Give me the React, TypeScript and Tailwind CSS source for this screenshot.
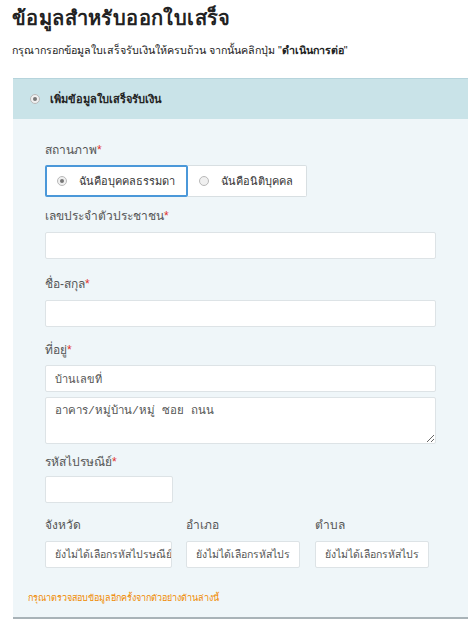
import React from "react";

function Radio({ checked }: { checked?: boolean }) {
  return (
    <span className="inline-flex h-[10px] w-[10px] shrink-0 items-center justify-center rounded-full border border-[#b9b9b9] bg-[#f0f0f0]">
      {checked && <span className="h-[4px] w-[4px] rounded-full bg-[#777]" />}
    </span>
  );
}

function Label({ text, req }: { text: string; req?: boolean }) {
  return (
    <p className="text-[12px] leading-[18px] text-[#555]">
      {text}
      {req && <span className="text-[#e0312c]">*</span>}
    </p>
  );
}

function Input({ className = "", placeholder = "" }: { className?: string; placeholder?: string }) {
  return (
    <input
      type="text"
      placeholder={placeholder}
      className={
        "block h-[27px] rounded-[2px] border border-[#dde3e6] bg-white px-[9px] text-[11px] text-[#333] placeholder:text-[#555] focus:outline-none " +
        className
      }
    />
  );
}

function Select({ text, className = "" }: { text: string; className?: string }) {
  return (
    <div
      className={
        "mt-[7px] flex h-[27px] items-center overflow-hidden whitespace-nowrap rounded-[2px] border border-[#dde3e6] bg-white pl-[9px] text-[10.5px] text-[#555] " +
        className
      }
    >
      {text}
    </div>
  );
}

export default function App() {
  return (
    <div className="h-[620px] w-[476px] overflow-hidden bg-white font-['Liberation_Sans',sans-serif]">
      <div className="px-[12px] pt-[3px]">
        <h1 className="text-[20px] font-bold leading-[30px] tracking-[0.4px] text-[#222]">ข้อมูลสำหรับออกใบเสร็จ</h1>
        <p className="mt-[9px] text-[10.7px] leading-[16px] text-[#222]">
          กรุณากรอกข้อมูลใบเสร็จรับเงินให้ครบถ้วน จากนั้นคลิกปุ่ม "<span className="font-bold">ดำเนินการต่อ</span>"
        </p>
      </div>

      <div className="ml-[13px] mt-[20px] w-[455px] border-b-2 border-[#a9b3b8] bg-[#eff6f9]">
        <div className="flex h-[41px] items-center gap-[10px] border-t border-[#b6d4dc] bg-[#c9e3e8] pl-[17px]">
          <Radio checked />
          <span className="text-[11px] font-bold text-[#222]">เพิ่มข้อมูลใบเสร็จรับเงิน</span>
        </div>

        <div className="pb-[12px] pl-[32px] pr-[32px] pt-[22px]">
          <Label text="สถานภาพ" req />
          <div className="mt-[6px] flex">
            <div className="flex h-[32px] w-[143px] items-center gap-[12px] whitespace-nowrap rounded-[2px] border-2 border-[#4b98d9] bg-white pl-[10px] text-[11px] text-[#333]">
              <Radio checked />
              ฉันคือบุคคลธรรมดา
            </div>
            <div className="flex h-[32px] w-[119px] items-center gap-[12px] whitespace-nowrap rounded-r-[2px] border border-l-0 border-[#d8dfe2] bg-white pl-[11px] text-[11px] text-[#333]">
              <Radio />
              ฉันคือนิติบุคคล
            </div>
          </div>

          <div className="mt-[10px]">
            <Label text="เลขประจำตัวประชาชน" req />
          </div>
          <Input className="mt-[7px] w-[391px]" />

          <div className="mt-[16px]">
            <Label text="ชื่อ-สกุล" req />
          </div>
          <Input className="mt-[7px] w-[391px]" />

          <div className="mt-[14px]">
            <Label text="ที่อยู่" req />
          </div>
          <Input className="mt-[6px] w-[391px]" placeholder="บ้านเลขที่" />
          <textarea
            placeholder="อาคาร/หมู่บ้าน/หมู่ ซอย ถนน"
            className="mt-[5px] block h-[47px] w-[391px] rounded-[2px] border border-[#dde3e6] bg-white px-[9px] py-[4px] font-['Liberation_Mono',monospace] text-[11.5px] placeholder:text-[#555] focus:outline-none"
          />

          <div className="mt-[9px]">
            <Label text="รหัสไปรษณีย์" req />
          </div>
          <Input className="mt-[5px] w-[128px]" />

          <div className="mt-[13px] flex">
            <div className="w-[141px]">
              <Label text="จังหวัด" />
              <Select text="ยังไม่ได้เลือกรหัสไปรษณีย์" className="w-[127px]" />
            </div>
            <div className="w-[129px]">
              <Label text="อำเภอ" />
              <Select text="ยังไม่ได้เลือกรหัสไปร" className="w-[114px]" />
            </div>
            <div>
              <Label text="ตำบล" />
              <Select text="ยังไม่ได้เลือกรหัสไปร" className="w-[114px]" />
            </div>
          </div>

          <p className="-ml-[17px] mt-[23px] text-[9px] leading-[14px] text-[#f08a00]">
            กรุณาตรวจสอบข้อมูลอีกครั้งจากตัวอย่างด้านล่างนี้
          </p>
        </div>
      </div>
    </div>
  );
}
